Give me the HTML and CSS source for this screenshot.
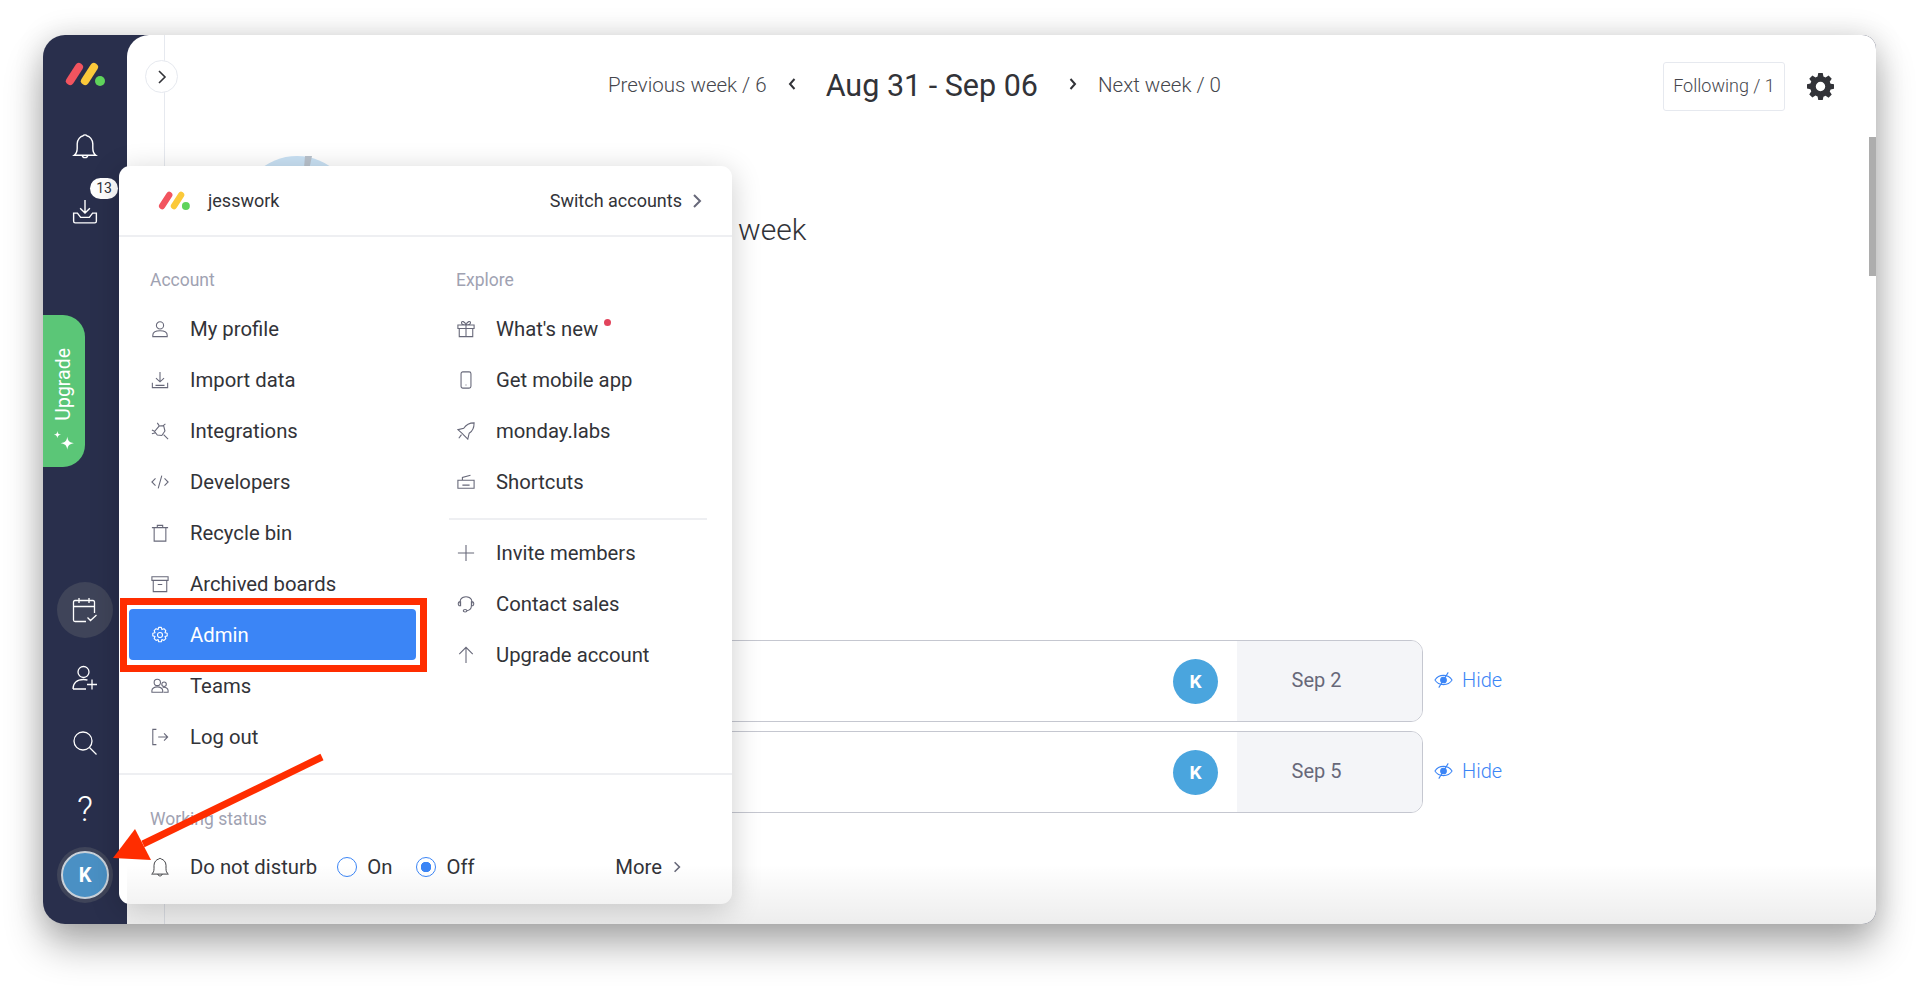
FILE: index.html
```html
<!DOCTYPE html>
<html lang="en">
<head>
    <meta charset="UTF-8">
    <meta name="viewport" content="width=device-width, initial-scale=1.0">
    <title>monday.com profile menu</title>
    <link rel="stylesheet" href="styles.css">
</head>
<body>

<svg class="sprite" width="0" height="0">
    <symbol id="logo" viewBox="0 0 40 24">
        <path d="M5 19 14 5" stroke="#f2545f" stroke-width="8" stroke-linecap="round"/>
        <path d="M20 19 29 5" stroke="#fbc93a" stroke-width="8" stroke-linecap="round"/>
        <circle cx="35" cy="19" r="5" fill="#5fd35b" stroke="none"/>
    </symbol>
    <symbol id="bell" viewBox="0 0 24 24">
        <path d="M2 20.500h20c-2-1.500-2.800-3.500-2.800-6.500V10c0-4-3-7-5.500-7.500C13.200 1.500 10.800 1.500 10.300 2.500 7.800 3 4.800 6 4.800 10v4c0 3-.8 5-2.800 6.500ZM9.500 20.500c0 3 5 3 5 0"/>
    </symbol>
</svg>

<div class="window">

    <!-- left nav -->
    <nav class="sidebar">
        <svg class="nav-logo"><use href="#logo"/></svg>
        <svg class="nav-icon nav-bell"><use href="#bell"/></svg>
        <div class="inbox">
            <svg class="nav-icon" viewBox="0 0 24 24"><path d="M12 1v12M7.500 8.500 12 13l4.500-4.500M5 13H1.500v7.500c0 1 .5 1.500 1.500 1.500h18c1 0 1.500-.5 1.500-1.500V13H19l-3 4H8l-3-4Z"/></svg>
            <span class="badge">13</span>
        </div>
        <div class="upgrade">
            <span>Upgrade</span>
            <svg class="sparkle" viewBox="0 0 20 20"><path d="M13 6c.5 4 2 5.500 6 6-4 .5-5.500 2-6 6-.5-4-2-5.500-6-6 4-.5 5.500-2 6-6ZM4 1c.3 2.300 1 3 3.300 3.300C5 4.600 4.300 5.300 4 7.600 3.700 5.300 3 4.600.7 4.300 3 4 3.700 3.300 4 1Z"/></svg>
        </div>
        <div class="nav-bottom">
            <div class="calendar">
                <svg class="nav-icon" viewBox="0 0 26 26"><path d="M22.500 16V5c0-1-.5-1.500-1.500-1.500H3C2 3.500 1.500 4 1.500 5v18c0 1 .5 1.500 1.500 1.500h11M1.500 9.500h21M7 1v5M17 1v5M15.500 20.500l3 3 6-5.500"/></svg>
            </div>
            <svg class="nav-icon nav-invite" viewBox="0 0 26 26"><circle cx="11.500" cy="7" r="5.500"/><path d="M1 24c0-6 4-9.500 10.500-9.500 1.500 0 3 .2 4 .7M1 24h13M20 14.500v10M15 19.500h10"/></svg>
            <svg class="nav-icon nav-search" viewBox="0 0 26 26"><circle cx="11" cy="11" r="9"/><path d="m17.500 17.500 7 7"/></svg>
            <span class="nav-help">?</span>
            <div class="nav-avatar"><span>K</span></div>
        </div>
    </nav>

    <!-- page behind the menu -->
    <main class="main">
        <button class="toggle"><svg viewBox="0 0 12 16"><path d="m3 2 6 6-6 6"/></svg></button>
        <div class="content">
            <header class="topbar">
                <span class="week-link">Previous week / 6</span>
                <svg class="week-arrow week-prev" viewBox="0 0 10 14"><path d="M7.500 2 3 7l4.500 5"/></svg>
                <h1 class="week-title">Aug 31 - Sep 06</h1>
                <svg class="week-arrow week-next" viewBox="0 0 10 14"><path d="M2.500 2 7 7l-4.500 5"/></svg>
                <span class="week-link">Next week / 0</span>
                <button class="following">Following / 1</button>
                <svg class="gear" viewBox="0 0 24 24"><path fill-rule="evenodd" d="M10 0h4l.6 3.200 1.900.8L19.200 2.200 22 5l-1.800 2.700.8 1.900 3 .5v3.900l-3 .6-.8 1.900 1.800 2.700-2.800 2.800-2.700-1.800-1.900.8L14 24h-4l-.6-3.200-1.900-.8L4.800 21.800 2 19l1.800-2.700-.8-1.900-3-.6V9.900l3-.5.8-1.900L2 5l2.800-2.800L7.500 4l1.900-.8L10 0Zm2 7.800a4.200 4.200 0 1 0 0 8.400 4.200 4.200 0 0 0 0-8.400Z"/></svg>
            </header>

            <section class="intro">
                <svg class="intro-pic" viewBox="0 0 116 116"><circle cx="58" cy="58" r="58" fill="#c9e1f4"/><path d="M66 0h7l-3 14-5-2Z" fill="#b9c2cc"/></svg>
                <h2 class="intro-title">Birthdays &amp; milestones this week</h2>
            </section>

            <section class="events">
                <div class="event">
                    <div class="card">
                        <span class="avatar">K</span>
                        <span class="card-date">Sep 2</span>
                    </div>
                    <a class="hide">
                        <svg viewBox="0 0 20 18"><path d="M1 9c4-6.500 14-6.500 18 0-4 6.500-14 6.500-18 0ZM15 1 5 17"/><circle cx="10" cy="9" r="3" fill="#3b85f6"/></svg>
                        Hide
                    </a>
                </div>
                <div class="event">
                    <div class="card">
                        <span class="avatar">K</span>
                        <span class="card-date">Sep 5</span>
                    </div>
                    <a class="hide">
                        <svg viewBox="0 0 20 18"><path d="M1 9c4-6.500 14-6.500 18 0-4 6.500-14 6.500-18 0ZM15 1 5 17"/><circle cx="10" cy="9" r="3" fill="#3b85f6"/></svg>
                        Hide
                    </a>
                </div>
            </section>
        </div>
        <div class="scrollbar"></div>
    </main>

    <!-- profile menu -->
    <div class="menu">
        <div class="menu-head">
            <svg class="menu-logo"><use href="#logo"/></svg>
            <span class="menu-account">jesswork</span>
            <span class="menu-switch">Switch accounts</span>
            <svg class="chev" viewBox="0 0 10 16"><path d="m2 2 6 6-6 6"/></svg>
        </div>

        <div class="menu-cols">
            <div class="menu-col">
                <div class="menu-label">Account</div>
                <div class="menu-item">
                    <svg viewBox="0 0 20 20"><circle cx="10" cy="6" r="4"/><path d="M2 18.500v-1.500c0-3 2.500-5 8-5s8 2 8 5v1.500Z"/></svg>
                    My profile
                </div>
                <div class="menu-item">
                    <svg viewBox="0 0 20 20"><path d="M10 1v11M5.500 8 10 12l4.500-4M1.500 13v5.500h17V13M5 16h10"/></svg>
                    Import data
                </div>
                <div class="menu-item">
                    <svg viewBox="0 0 20 20"><path d="m7 1 2 3M16 2l-3 2.500M1 9l3.500 1.500M1 13l4-1M9 4.500l5-.5 1.500 6-3.500 5-5-.5-3-4 5-6ZM14 14l5 5"/></svg>
                    Integrations
                </div>
                <div class="menu-item">
                    <svg viewBox="0 0 20 20"><path d="M5 6 1 10l4 4M15 6l4 4-4 4M12 3 8 17"/></svg>
                    Developers
                </div>
                <div class="menu-item">
                    <svg viewBox="0 0 20 20"><path d="M1 4h18M7 4V1.500h6V4M3.500 4v15h13V4"/></svg>
                    Recycle bin
                </div>
                <div class="menu-item">
                    <svg viewBox="0 0 20 20"><path d="M1 2h18v4H1ZM2.500 6v12.500h15V6M7.500 10.500h5"/></svg>
                    Archived boards
                </div>
                <div class="menu-item menu-item-active">
                    <svg viewBox="0 0 20 20"><circle cx="10" cy="10" r="2.800"/><path d="m8.500 1.500h3l.6 2.500 2.300-1 2.100 2.100-1 2.300 2.500.6v3l-2.500.6 1 2.300-2.100 2.100-2.300-1-.6 2.500h-3l-.6-2.500-2.300 1-2.100-2.100 1-2.300-2.500-.6v-3l2.500-.6-1-2.300 2.100-2.100 2.300 1Z" stroke-linejoin="round"/></svg>
                    Admin
                </div>
                <div class="menu-item">
                    <svg viewBox="0 0 20 20"><circle cx="7" cy="6" r="3.500"/><circle cx="14.500" cy="8" r="2.500"/><path d="M1 17v-2c0-2 2.500-4 6-4s6 2 6 4v2ZM13 11.500c3.500-.5 6 1 6 3.500v2h-5"/></svg>
                    Teams
                </div>
                <div class="menu-item">
                    <svg viewBox="0 0 20 20"><path d="M6 1.500H2v17h4M8 10h10M14.500 6l4 4-4 4"/></svg>
                    Log out
                </div>
            </div>

            <div class="menu-col menu-col-right">
                <div class="menu-label">Explore</div>
                <div class="menu-item">
                    <svg viewBox="0 0 20 20"><path d="M1 5.500h18v4H1ZM2.500 9.500v9h15v-9M10 5.500v13M10 5.500C7 5.500 5 4.500 5 3c0-2 3.500-2 5 2.500 1.500-4.500 5-4.500 5-2.500 0 1.500-2 2.500-5 2.500Z"/></svg>
                    What's new<i class="dot"></i>
                </div>
                <div class="menu-item">
                    <svg viewBox="0 0 20 20"><rect x="4.500" y="1" width="11" height="18" rx="2"/><path d="M9.500 15.500h1"/></svg>
                    Get mobile app
                </div>
                <div class="menu-item">
                    <svg viewBox="0 0 20 20"><path d="M19 1c-5 0-9 2-11.500 6L1 8.500 6 13l1 1 5 5 1.500-6.500C17.500 10 19 6 19 1ZM2 18l3-4"/></svg>
                    monday.labs
                </div>
                <div class="menu-item">
                    <svg viewBox="0 0 20 20"><path d="M1 8h18v9H1ZM6 13.500h8M6 8V5l9-2.500"/></svg>
                    Shortcuts
                </div>
                <div class="menu-rule"></div>
                <div class="menu-item">
                    <svg viewBox="0 0 20 20"><path d="M10 1v18M1 10h18"/></svg>
                    Invite members
                </div>
                <div class="menu-item">
                    <svg viewBox="0 0 20 20"><path d="M4 12C2 7 4 2 10 2s8 5 6 10M4 7.500H2.500C1 8.500 1 11 2.500 12H4ZM16 7.500h1.500c1.500 1 1.500 3.500 0 4.500H16ZM16 12c0 3-2 5-5 5.500"/><ellipse cx="9" cy="17.500" rx="2" ry="1.300"/></svg>
                    Contact sales
                </div>
                <div class="menu-item">
                    <svg viewBox="0 0 20 20"><path d="M10 19V1.500M2.500 9 10 1.500 17.500 9"/></svg>
                    Upgrade account
                </div>
            </div>
        </div>

        <div class="menu-foot">
            <div class="menu-label">Working status</div>
            <div class="status">
                <svg class="status-bell"><use href="#bell"/></svg>
                <span class="status-name">Do not disturb</span>
                <span class="radio"></span>
                <span class="radio-text">On</span>
                <span class="radio radio-on"></span>
                <span class="radio-text">Off</span>
                <span class="status-more">More</span>
                <svg class="chev" viewBox="0 0 10 16"><path d="m2 2 6 6-6 6"/></svg>
            </div>
        </div>
    </div>

    <div class="fade"></div>
</div>

<!-- screenshot annotations -->
<div class="mark-box"></div>
<svg class="mark-arrow" viewBox="0 0 240 130">
    <path d="M224 6 45 93" stroke="#ff2d00" stroke-width="7"/>
    <path d="M15 107 37 78 53 109Z" fill="#ff2d00" stroke="none"/>
</svg>

</body>
</html>
```

FILE: styles.css
```css
* {
    box-sizing: border-box;
}
html, body {
    height: 100%;
}
body {
    margin: 0;
    padding: 35px 44px 65px 43px;
    background: #fff;
    font-family: Roboto, sans-serif;
    color: #323338;
    overflow: hidden;
    position: relative;
}
.sprite {
    position: absolute;
}
svg {
    display: block;
    fill: none;
    stroke: currentColor;
}
h1, h2 {
    margin: 0;
    font-weight: 400;
}
button {
    font-family: inherit;
    background: #fff;
}

/* window */
.window {
    position: relative;
    display: flex;
    height: 100%;
    background: #292f4c;
    border-radius: 22px 14px 14px 22px;
    overflow: hidden;
    box-shadow: 0 22px 38px rgba(0, 0, 0, 0.3), 0 0 30px rgba(0, 0, 0, 0.14);
}

/* left nav */
.sidebar {
    width: 84px;
    flex: none;
    display: flex;
    flex-direction: column;
    align-items: center;
    color: #fff;
    padding-top: 27px;
}
.nav-logo {
    width: 40px;
    height: 24px;
}
.nav-icon {
    width: 26px;
    height: 26px;
    stroke-width: 1.3;
}
.nav-bell {
    margin-top: 47px;
}
.inbox {
    position: relative;
    margin-top: 40px;
}
.badge {
    position: absolute;
    top: -21px;
    left: 18px;
    width: 28px;
    height: 21px;
    border-radius: 11px;
    background: #fff;
    color: #323338;
    font-size: 14px;
    line-height: 21px;
    text-align: center;
}
.upgrade {
    align-self: flex-start;
    width: 42px;
    height: 152px;
    margin-top: 90px;
    background: #5bc677;
    border-radius: 0 22px 22px 0;
    display: flex;
    flex-direction: column;
    align-items: center;
    padding-top: 33px;
}
.upgrade span {
    writing-mode: vertical-rl;
    transform: rotate(180deg);
    font-size: 19.500px;
    line-height: 22px;
}
.sparkle {
    width: 22px;
    height: 22px;
    margin-top: 9px;
    fill: #fff;
    stroke: none;
}
.nav-bottom {
    margin-top: auto;
    display: flex;
    flex-direction: column;
    align-items: center;
    padding-bottom: 21px;
}
.calendar {
    width: 56px;
    height: 56px;
    border-radius: 50%;
    background: #3f4459;
    display: flex;
    align-items: center;
    justify-content: center;
}
.nav-invite {
    margin-top: 27px;
}
.nav-search {
    margin-top: 39px;
}
.nav-help {
    font-size: 35px;
    font-weight: 300;
    line-height: 38px;
    margin-top: 35px;
}
.nav-avatar {
    width: 56px;
    height: 56px;
    margin-top: 18px;
    border-radius: 50%;
    background: #3f4459;
    display: flex;
    align-items: center;
    justify-content: center;
}
.nav-avatar span {
    width: 48px;
    height: 48px;
    border-radius: 50%;
    background: #4a90c4;
    border: 2px solid #c9d1d9;
    font-size: 20px;
    font-weight: 700;
    line-height: 44px;
    text-align: center;
}

/* page behind the menu */
.main {
    position: relative;
    flex: 1;
    display: flex;
    background: #fff;
    border-radius: 22px 0 0 0;
    padding-left: 37px;
}
.toggle {
    position: absolute;
    top: 25px;
    left: 18px;
    width: 33px;
    height: 33px;
    padding: 0;
    border: 1px solid #e6e9ef;
    border-radius: 50%;
    color: #323338;
    display: flex;
    align-items: center;
    justify-content: center;
}
.toggle svg {
    width: 12px;
    height: 16px;
    stroke-width: 1.6;
}
.content {
    flex: 1;
    border-left: 1px solid #e6e9ef;
}
.topbar {
    display: flex;
    align-items: center;
    height: 76px;
    padding: 27px 42px 0 443px;
    color: #45464c;
}
.week-link {
    font-size: 20.500px;
    font-weight: 300;
    margin-bottom: 3px;
}
.week-arrow {
    width: 10px;
    height: 14px;
    stroke-width: 2;
    margin-bottom: 5px;
    color: #323338;
}
.week-prev {
    margin-left: 20px;
    margin-right: 29px;
}
.week-next {
    margin-left: 30px;
    margin-right: 20px;
}
.week-title {
    font-size: 30.500px;
    color: #323338;
    margin-bottom: 3px;
}
.following {
    margin-left: auto;
    width: 122px;
    height: 49px;
    border: 1px solid #e6e9ef;
    border-radius: 3px;
    font-size: 18px;
    font-weight: 300;
    color: #45464c;
    padding: 0 0 2px;
}
.gear {
    width: 27px;
    height: 27px;
    margin-left: 22px;
    fill: #323338;
    stroke: none;
}
.intro {
    display: flex;
    margin: 45px 0 0 74px;
    height: 116px;
}
.intro-pic {
    width: 116px;
    height: 116px;
    stroke: none;
}
.intro-title {
    font-size: 30px;
    font-weight: 300;
    margin: 56px 0 0 19px;
    white-space: nowrap;
}
.events {
    margin: 368px 0 0 205px;
    display: flex;
    flex-direction: column;
    gap: 9px;
}
.event {
    display: flex;
    align-items: center;
}
.card {
    width: 1053px;
    height: 82px;
    display: flex;
    justify-content: flex-end;
    align-items: center;
    border: 1px solid #c5c7d0;
    border-radius: 12px;
    overflow: hidden;
}
.avatar {
    width: 45px;
    height: 45px;
    border-radius: 50%;
    background: #4aa5de;
    color: #fff;
    font-size: 19px;
    font-weight: 700;
    line-height: 45px;
    text-align: center;
}
.card-date {
    width: 185px;
    height: 100%;
    margin-left: 19px;
    padding-right: 26px;
    background: #f4f5f8;
    color: #676879;
    font-size: 20px;
    line-height: 78px;
    text-align: center;
}
.hide {
    display: flex;
    align-items: center;
    gap: 9px;
    margin: 0 0 2px 11px;
    color: #3b85f6;
    font-size: 20px;
    font-weight: 300;
}
.hide svg {
    width: 19px;
    height: 18px;
    stroke-width: 1.1;
}
.scrollbar {
    position: absolute;
    top: 102px;
    right: 0;
    width: 7px;
    height: 139px;
    background: #adadad;
}

/* profile menu */
.menu {
    position: absolute;
    top: 131px;
    left: 76px;
    width: 613px;
    height: 738px;
    background: #fff;
    border-radius: 11px;
    box-shadow: 0 6px 30px rgba(0, 0, 0, 0.2);
}
.menu-head {
    height: 71px;
    display: flex;
    align-items: center;
    padding: 0 30px 0 39px;
    border-bottom: 2px solid #eeeff2;
    font-size: 18px;
}
.menu-logo {
    width: 32px;
    height: 19px;
}
.menu-account {
    margin-left: 18px;
}
.menu-switch {
    margin-left: auto;
}
.chev {
    width: 10px;
    height: 16px;
    margin-left: 10px;
    color: #676879;
    stroke-width: 2;
}
.menu-cols {
    display: flex;
    height: 538px;
    border-bottom: 2px solid #eeeff2;
    padding-top: 31px;
}
.menu-col {
    width: 330px;
    flex: none;
    padding: 0 10px;
}
.menu-col-right {
    width: 283px;
    padding: 0;
}
.menu-label {
    padding-left: 21px;
    height: 24px;
    font-size: 17.500px;
    line-height: 24px;
    color: #9fa2b2;
    margin-bottom: 11px;
}
.menu-col-right .menu-label {
    padding-left: 7px;
}
.menu-item {
    display: flex;
    align-items: center;
    height: 51px;
    font-size: 20.300px;
    padding-left: 22px;
    border-radius: 4px;
    white-space: nowrap;
}
.menu-col-right .menu-item {
    padding-left: 8px;
}
.menu-item svg {
    width: 18px;
    height: 18px;
    margin-right: 21px;
    color: #676879;
    stroke-width: 1.2;
    flex: none;
}
.menu-item-active {
    background: #3b85f6;
    color: #fff;
    width: 287px;
}
.menu-item-active svg {
    color: #fff;
}
.dot {
    width: 7px;
    height: 7px;
    border-radius: 50%;
    background: #e2445c;
    margin: -12px 0 0 6px;
}
.menu-rule {
    height: 2px;
    background: #eeeff2;
    width: 258px;
    margin: 11px 0 7px;
}
.menu-foot {
    padding: 32px 30px 0 31px;
}
.menu-foot .menu-label {
    padding-left: 0;
    margin-bottom: 17px;
}
.status {
    display: flex;
    align-items: center;
    height: 38px;
    font-size: 20.300px;
}
.status-bell {
    width: 20px;
    height: 20px;
    margin-right: 20px;
    color: #323338;
    stroke-width: 1.1;
}
.radio {
    width: 20px;
    height: 20px;
    margin-left: 20px;
    border: 1.5px solid #3b85f6;
    border-radius: 50%;
}
.radio-on {
    margin-left: 24px;
    background: radial-gradient(circle, #3b85f6 0 5px, #fff 5.500px);
}
.radio-text {
    margin-left: 10px;
}
.status-more {
    margin-left: auto;
}
.status .chev {
    margin-left: 11px;
    margin-right: 21px;
    width: 8px;
    height: 14px;
}
.fade {
    position: absolute;
    left: 84px;
    right: 0;
    bottom: 0;
    height: 60px;
    background: linear-gradient(rgba(0, 0, 0, 0), rgba(0, 0, 0, 0.07));
    pointer-events: none;
}

/* screenshot annotations */
.mark-box {
    position: absolute;
    top: 598px;
    left: 120px;
    width: 307px;
    height: 74px;
    border: 7px solid #ff2d00;
}
.mark-arrow {
    position: absolute;
    top: 751px;
    left: 98px;
    width: 240px;
    height: 130px;
}
```
